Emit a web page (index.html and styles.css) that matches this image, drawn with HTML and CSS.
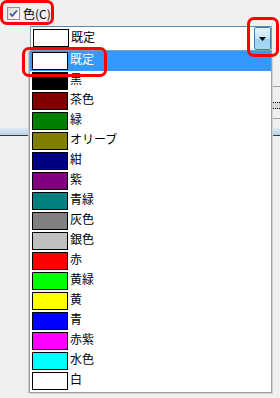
FILE: index.html
```html
<!DOCTYPE html>
<html lang="ja">
<head>
    <meta charset="UTF-8">
    <title>色の選択</title>
    <link rel="stylesheet" href="styles.css">
</head>
<body>

<div class="screen">
    <div class="option-row">
        <span class="checkbox">
            <svg width="13" height="13" viewBox="0 0 13 13">
                <path d="M3 6.5 L5.2 9 L10 3.5" fill="none" stroke="#3a52a0" stroke-width="1.8"/>
            </svg>
        </span>
        <span class="option-label">色(C)</span>
    </div>

    <div class="combo">
        <span class="swatch" style="background: #ffffff"></span>
        <span class="combo-text">既定</span>
        <span class="combo-button">
            <svg width="7" height="4" viewBox="0 0 7 4"><path d="M0 0 H7 L3.5 4 Z" fill="#000"/></svg>
        </span>
    </div>

    <div class="toolbar"><span class="dots"></span></div>
    <div class="rule"></div>

    <ul class="color-list" id="colorList"></ul>

    <div class="mark mark-check"></div>
    <div class="mark mark-item"></div>
    <div class="mark mark-button"></div>
</div>

<script>
    const colors = [
        ['既定', '#ffffff'],
        ['黒', '#000000'],
        ['茶色', '#800000'],
        ['緑', '#008000'],
        ['オリーブ', '#808000'],
        ['紺', '#000080'],
        ['紫', '#800080'],
        ['青緑', '#008080'],
        ['灰色', '#808080'],
        ['銀色', '#c0c0c0'],
        ['赤', '#ff0000'],
        ['黄緑', '#00ff00'],
        ['黄', '#ffff00'],
        ['青', '#0000ff'],
        ['赤紫', '#ff00ff'],
        ['水色', '#00ffff'],
        ['白', '#ffffff']
    ];

    const list = document.getElementById('colorList');
    colors.forEach(([name, value], i) => {
        const li = document.createElement('li');
        li.className = i === 0 ? 'color-item selected' : 'color-item';
        li.innerHTML = `<span class="swatch" style="background: ${value}"></span><span class="color-name">${name}</span>`;
        list.appendChild(li);
    });
</script>

</body>
</html>
```

FILE: styles.css
```css
* {
    margin: 0;
    padding: 0;
    box-sizing: border-box;
}

body {
    font-family: "Noto Sans CJK JP", "Liberation Sans", sans-serif;
    font-size: 12px;
    background-color: #f0f0f0;
    color: #000;
}

.screen {
    position: relative;
    width: 280px;
    height: 398px;
    overflow: hidden;
}

.option-row {
    display: flex;
    align-items: center;
    gap: 3px;
    height: 26px;
    padding: 1px 0 0 7px;
}

.checkbox {
    display: block;
    width: 13px;
    height: 13px;
    border: 1px solid #8e8f8f;
    background: linear-gradient(135deg, #dcdcdc, #ffffff);
}

.checkbox svg {
    display: block;
    margin: -1px;
}

.option-label {
    line-height: 14px;
}

.combo {
    display: flex;
    align-items: center;
    margin-left: 30px;
    width: 242px;
    height: 25px;
    background: #fff;
    border: 1px solid #7f9db9;
    border-top-color: #5b8cb8;
    padding-left: 2px;
}

.combo .swatch {
    margin-top: -1px;
}

.combo-text {
    margin-left: 2px;
    line-height: 16px;
    flex: 1;
    margin-top: -4px;
}

.combo-button {
    display: flex;
    align-items: center;
    justify-content: center;
    width: 17px;
    height: 23px;
    border: 1px solid #3c7fb1;
    border-radius: 2px;
    background: linear-gradient(#e5f4fc, #c4e5f6 50%, #98d1ef 51%, #a7d9f5);
}

.swatch {
    display: block;
    width: 36px;
    height: 18px;
    border: 1px solid #000;
}

.toolbar {
    margin: 35px 0 0 260px;
    height: 33px;
    border-top: 1px solid #a0a0a0;
    border-bottom: 1px solid #a0a0a0;
}

.dots {
    display: block;
    margin: 15px 0 0 13px;
    width: 7px;
    height: 7px;
    border-top: 1px dotted #000;
    border-bottom: 1px dotted #000;
    background: #d8d8d8;
}

.rule {
    margin-top: 9px;
    height: 8px;
    background: linear-gradient(#dfe9f5, #b9d1ea);
    border-bottom: 1px solid #383838;
}

.color-list {
    list-style: none;
    position: absolute;
    top: 51px;
    left: 29px;
    width: 243px;
    height: 342px;
    background: #fff;
    border: 1px solid #a0a0a0;
    border-top: none;
    box-shadow: -1px 0 0 #c8c8c8, 1px 1px 0 #d4d4d4;
}

.color-item {
    display: flex;
    align-items: center;
    height: 20px;
    padding-left: 2px;
    gap: 2px;
}

.color-name {
    line-height: 16px;
    margin-top: -4px;
}

.color-item.selected {
    background: #3399ff;
    color: #fff;
}

.mark {
    position: absolute;
    border: 3px solid #ff0000;
    border-radius: 7px;
}

.mark-check {
    left: 0;
    top: 0;
    width: 54px;
    height: 25px;
}

.mark-item {
    left: 22px;
    top: 47px;
    width: 85px;
    height: 30px;
}

.mark-button {
    left: 247px;
    top: 17px;
    width: 32px;
    height: 40px;
}
```
